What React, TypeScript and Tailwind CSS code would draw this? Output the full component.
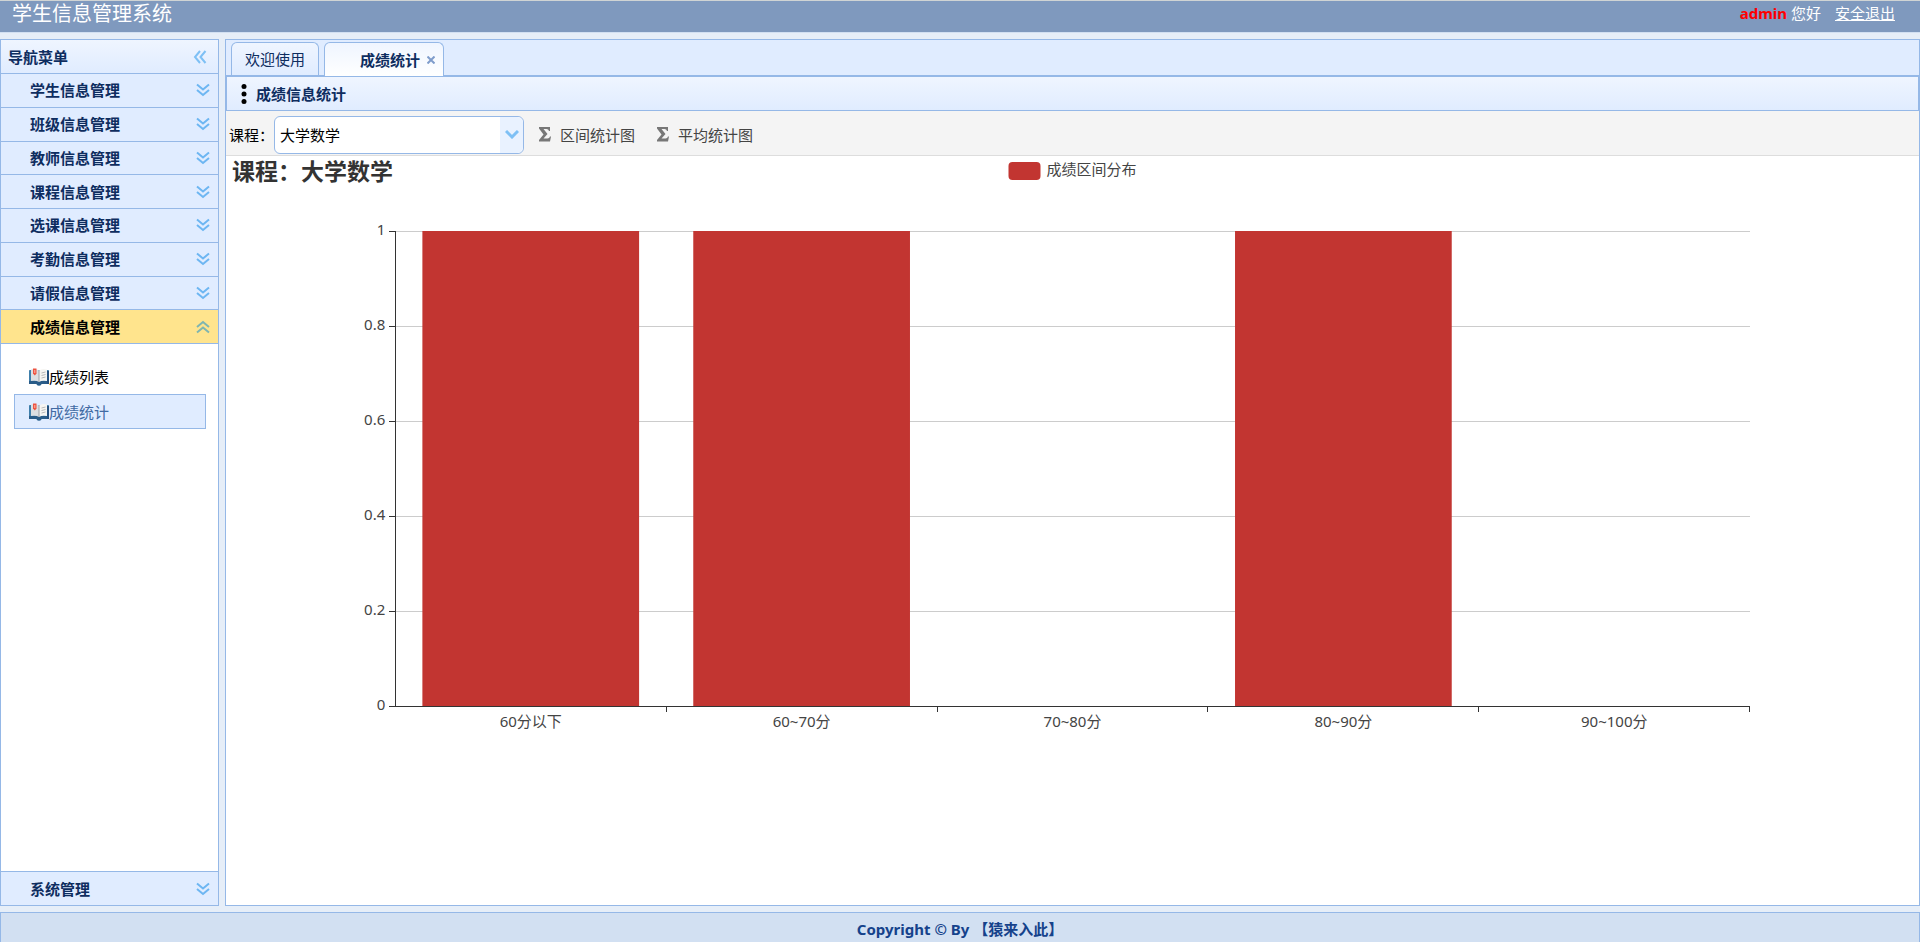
import React, { useState } from 'react';

const MENUS = [
  '学生信息管理',
  '班级信息管理',
  '教师信息管理',
  '课程信息管理',
  '选课信息管理',
  '考勤信息管理',
  '请假信息管理',
  '成绩信息管理',
];

const SCORE_ITEMS = ['成绩列表', '成绩统计'];

const COURSES = ['大学数学', '大学英语'];

const SCORE_RANGES = [
  { label: '60分以下', value: 1 },
  { label: '60~70分', value: 1 },
  { label: '70~80分', value: 0 },
  { label: '80~90分', value: 1 },
  { label: '90~100分', value: 0 },
];

const TICKS = ['0', '0.2', '0.4', '0.6', '0.8', '1'];

// Double chevron, points down unless rotated
const DoubleChevron: React.FC<{ className?: string }> = ({ className }) => (
  <svg viewBox="0 0 14 14" className={`h-3.5 w-3.5 shrink-0 ${className ?? ''}`} fill="none" strokeWidth="2" aria-hidden="true">
    <path d="M1 1.5 L7 6.5 L13 1.5" />
    <path d="M1 7 L7 12 L13 7" />
  </svg>
);

const BookIcon = () => (
  <svg viewBox="0 0 20 18" className="h-[18px] w-5 shrink-0" aria-hidden="true">
    <path d="M0 2.5 Q0 2 1 2 H19 Q20 2 20 2.5 V16 H12.5 Q12 17.5 10 17.5 Q8 17.5 7.5 16 H0 Z" fill="#3f7fab" />
    <path d="M0 13 H20 V16 H12.5 Q12 17.5 10 17.5 Q8 17.5 7.5 16 H0 Z" fill="#2a5c88" />
    <path d="M18 3 H20 V16 H18 Z" fill="#234f7d" />
    <path d="M2 1.5 Q7 0 10 2.5 V14 Q7 12 2 13 Z" fill="#dcdfe2" />
    <path d="M18 1.500 Q13 0 10 2.500 V14 Q13 12 18 13 Z" fill="#f6f5f2" />
    <path d="M10 2.5 V14" stroke="#9a9fa6" />
    <path d="M12.5 5 L16.5 4 M12.5 7.5 L16.5 6.5 M12.5 10 L16.5 9" stroke="#b9b9b9" />
    <path d="M4 0.5 H7.5 V5.5 L5.8 7.5 L4 5.5 Z" fill="#ee5340" />
    <path d="M5.8 2 V5" stroke="#f9b5a8" />
  </svg>
);

const SigmaIcon = () => (
  <svg viewBox="0 0 12 15" className="h-[15px] w-3 shrink-0" aria-hidden="true">
    <path
      d="M0 0 H11 V4 H10 Q9.5 2 7.5 2 H4.5 L8.5 7 L4.5 11.5 H8.5 Q10.5 11.500 11 9.500 H12 L11 14.500 H0 V13 L4.5 7.500 L0 1.500 Z"
      fill="#777"
    />
  </svg>
);

const ScoreChart: React.FC<{ course: string }> = ({ course }) => (
  <svg className="block h-[580px] w-full" role="img" aria-label="成绩区间分布">
    <text x="6" y="24" fontSize="23" fontWeight="700" fill="#333">
      课程：{course}
    </text>

    <svg x="50%" y="0" overflow="visible">
      <rect x="-64" y="6" width="32" height="18" rx="4" fill="#c23531" />
      <text x="-26" y="19" fontSize="15" fill="#444">
        成绩区间分布
      </text>
    </svg>

    {TICKS.map((tick, i) => {
      const y = 550 - i * 95;
      return (
        <g key={tick}>
          <line x1="10%" x2="90%" y1={y + 0.5} y2={y + 0.5} stroke="#ccc" shapeRendering="crispEdges" />
          <svg x="10%" y={y} overflow="visible">
            <line x1="-6" x2="0" y1="0.5" y2="0.5" stroke="#333" shapeRendering="crispEdges" />
            <text x="-10" y="4" fontSize="15" textAnchor="end" fill="#444">
              {tick}
            </text>
          </svg>
        </g>
      );
    })}

    {SCORE_RANGES.map((range, i) => (
      <g key={range.label}>
        <rect
          x={`${11.6 + i * 16}%`}
          y={550 - range.value * 475}
          width="12.8%"
          height={range.value * 475}
          fill="#c23531"
        />
        <text x={`${18 + i * 16}%`} y="571" fontSize="15" textAnchor="middle" fill="#444">
          {range.label}
        </text>
      </g>
    ))}

    {/* Axes */}
    <line x1="10%" x2="10%" y1="75" y2="551" stroke="#333" shapeRendering="crispEdges" />
    <line x1="10%" x2="90%" y1="550.5" y2="550.5" stroke="#333" shapeRendering="crispEdges" />
    {SCORE_RANGES.map((range, i) => (
      <line
        key={range.label}
        x1={`${26 + i * 16}%`}
        x2={`${26 + i * 16}%`}
        y1="551"
        y2="556"
        stroke="#333"
        shapeRendering="crispEdges"
      />
    ))}
  </svg>
);

const App: React.FC = () => {
  const [course, setCourse] = useState(COURSES[0]);

  return (
    <div className="flex h-screen flex-col bg-[#e6eef8] font-['Noto_Sans','Noto_Sans_CJK_SC',sans-serif] text-[15px] leading-5 text-black">
      {/* Top bar */}
      <header className="flex h-[33px] shrink-0 items-start justify-between border-t border-b border-t-[#d0d4d4] border-b-[#d2e0f2] bg-[#7f99be] pr-[25px] pl-3 text-white">
        <h1 className="text-xl leading-[26px]">学生信息管理系统</h1>
        <div className="flex gap-3.5 leading-6">
          <span>
            <b className="text-[#f00]">admin</b> 您好
          </span>
          <a href="#logout" className="underline">
            安全退出
          </a>
        </div>
      </header>

      <div className="flex min-h-0 grow gap-1.5 py-1.5">
        {/* Sidebar */}
        <aside className="flex w-[219px] shrink-0 flex-col border border-[#95b8e7] bg-white">
          <div className="flex h-[33px] shrink-0 items-center justify-between bg-linear-to-b from-[#eff5ff] to-[#e0ecff] pr-[11px] pl-[7px]">
            <h2 className="font-bold text-[#0e2d5f]">导航菜单</h2>
            <button type="button" aria-label="收起菜单">
              <DoubleChevron className="rotate-90 stroke-[#7ec0f5]" />
            </button>
          </div>
          <nav className="flex grow flex-col">
            <div className="grid h-[270px] shrink-0 grid-rows-8">
              {MENUS.map((menu) => {
                const open = menu === '成绩信息管理';
                return (
                  <button
                    key={menu}
                    type="button"
                    aria-expanded={open}
                    className={`flex items-center justify-between border-t border-[#95b8e7] pr-2 pl-[29px] font-bold ${
                      open ? 'bg-[#ffe48d] text-black' : 'bg-[#e0ecff] text-[#0e2d5f]'
                    }`}
                  >
                    {menu}
                    <DoubleChevron className={open ? 'rotate-180 stroke-[#7fb5b0]' : 'stroke-[#6db6f2]'} />
                  </button>
                );
              })}
            </div>
            <ul className="grow border-t border-[#95b8e7] pt-[15px] pr-3 pl-[13px]">
              {SCORE_ITEMS.map((item) => (
                <li key={item}>
                  <a
                    href="#score"
                    className={`flex h-[35px] items-center border pl-3.5 ${
                      item === '成绩统计' ? 'border-[#95b8e7] bg-[#e0ecff] text-[#416aa3]' : 'border-transparent'
                    }`}
                  >
                    <BookIcon />
                    {item}
                  </a>
                </li>
              ))}
            </ul>
            <button
              type="button"
              aria-expanded={false}
              className="flex h-[34px] shrink-0 items-center justify-between border-t border-[#95b8e7] bg-[#e0ecff] pr-2 pl-[29px] font-bold text-[#0e2d5f]"
            >
              系统管理
              <DoubleChevron className="stroke-[#6db6f2]" />
            </button>
          </nav>
        </aside>

        {/* Content */}
        <main className="flex min-w-0 grow flex-col border border-[#95b8e7] bg-white">
          <div className="flex h-9 shrink-0 items-end gap-[5px] border-b border-[#95b8e7] bg-[#e0ecff] pl-[5px]">
            <button
              type="button"
              className="h-[33px] rounded-t-md border border-b-0 border-[#95b8e7] bg-linear-to-b from-[#eff5ff] to-[#e0ecff] px-[13px] text-[#0e2d5f]"
            >
              欢迎使用
            </button>
            <div className="-mb-px flex h-[34px] items-center gap-[7px] rounded-t-md border border-b-0 border-[#95b8e7] bg-linear-to-b from-[#eff5ff] to-white pr-2 pl-[35px] text-[#0e2d5f]">
              <button type="button" className="font-bold">
                成绩统计
              </button>
              <button type="button" aria-label="关闭">
                <svg viewBox="0 0 8 8" className="h-2 w-2" fill="none" stroke="#7f9ccb" strokeWidth="2" aria-hidden="true">
                  <path d="M0.5 0.5 L7.5 7.5 M7.5 0.5 L0.5 7.5" />
                </svg>
              </button>
            </div>
          </div>

          <div className="flex h-[35px] shrink-0 items-center gap-[9px] border border-[#95b8e7] bg-linear-to-b from-[#eff5ff] to-[#e0ecff] pl-3.5">
            <svg viewBox="0 0 6 20" className="h-5 w-1.5" aria-hidden="true">
              <circle cx="3" cy="2.5" r="2.5" />
              <circle cx="3" cy="10" r="2.5" />
              <circle cx="3" cy="17.5" r="2.5" />
            </svg>
            <h2 className="font-bold text-[#0e2d5f]">成绩信息统计</h2>
          </div>

          <div className="flex h-[45px] shrink-0 items-center border-b border-[#ddd] bg-[#f4f4f4] pt-[3px] pl-[3px]">
            <label htmlFor="course">课程：</label>
            <div className="relative w-[250px]">
              <select
                id="course"
                value={course}
                onChange={(e) => setCourse(e.target.value)}
                className="block h-[38px] w-full appearance-none rounded-md border border-[#95b8e7] bg-white px-[5px]"
              >
                {COURSES.map((name) => (
                  <option key={name}>{name}</option>
                ))}
              </select>
              <span className="pointer-events-none absolute inset-y-px right-px flex w-[23px] items-center justify-center rounded-r-md bg-[#e9f2ff]">
                <svg viewBox="0 0 14 9" className="h-[9px] w-3.5" fill="none" stroke="#7ec0f5" strokeWidth="3" aria-hidden="true">
                  <path d="M1 1 L7 7 L13 1" />
                </svg>
              </span>
            </div>
            <button type="button" className="ml-[15px] flex items-center gap-[9px] text-[#444]">
              <SigmaIcon />
              区间统计图
            </button>
            <button type="button" className="ml-[22px] flex items-center gap-[9px] text-[#444]">
              <SigmaIcon />
              平均统计图
            </button>
          </div>

          {/* Chart */}
          <div className="min-h-0 grow overflow-hidden">
            <ScoreChart course={course} />
          </div>
        </main>
      </div>

      <footer className="h-[30px] shrink-0 border border-b-0 border-[#95b8e7] bg-[#d2e0f2] text-center leading-8 font-bold text-[#15428b]">
        Copyright © By 【猿来入此】
      </footer>
    </div>
  );
};

export default App;
